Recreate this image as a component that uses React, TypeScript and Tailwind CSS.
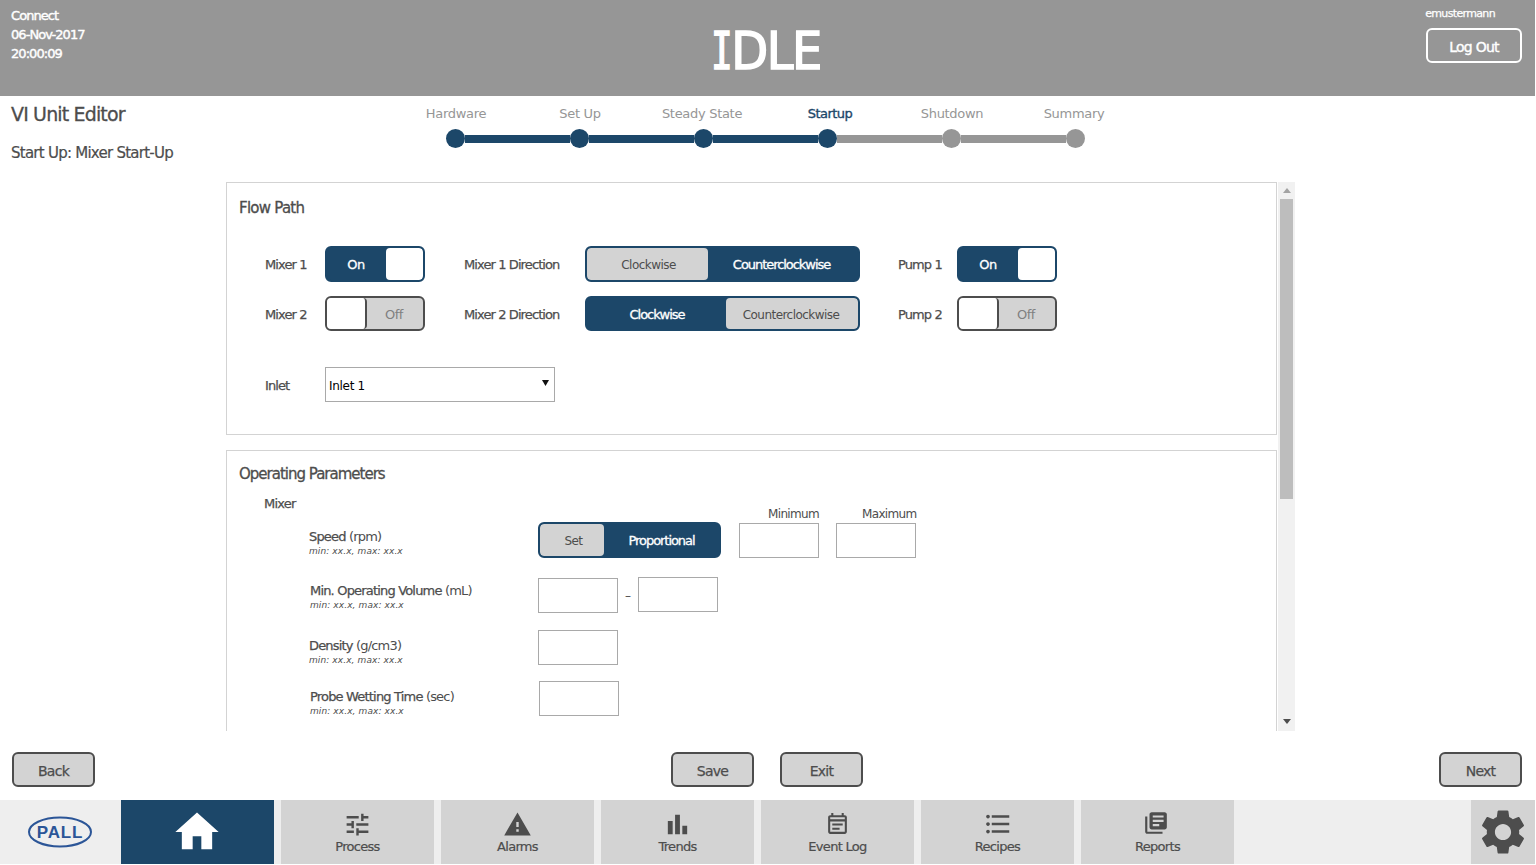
import React from 'react';
import {
  MdBarChart,
  MdFormatListBulleted,
  MdHome,
  MdLibraryBooks,
  MdOutlineEventNote,
  MdSettings,
  MdTune,
  MdWarning,
} from 'react-icons/md';

const steps = [
  { label: 'Hardware', done: true },
  { label: 'Set Up', done: true },
  { label: 'Steady State', done: true, nudge: 'pr-1' },
  { label: 'Startup', done: true, current: true },
  { label: 'Shutdown', done: false },
  { label: 'Summary', done: false, nudge: 'pr-1' },
];

const tabs = [
  { label: 'Process', icon: <MdTune size={29} className="-mb-[2px]" /> },
  { label: 'Alarms', icon: <MdWarning size={29} className="-mb-[2px]" /> },
  { label: 'Trends', icon: <MdBarChart size={29} className="-mb-[2px]" /> },
  { label: 'Event Log', icon: <MdOutlineEventNote size={25} /> },
  { label: 'Recipes', icon: <MdFormatListBulleted size={30} className="-mb-[2px]" /> },
  { label: 'Reports', icon: <MdLibraryBooks size={26} className="mb-[1px] mr-[3px]" /> },
];

const Toggle = ({ on }: { on: boolean }) =>
  on ? (
    <div className="flex h-9 w-[100px] overflow-hidden rounded-md border-2 border-[#1c4769] bg-[#1c4769]">
      <div className="flex w-[59px] items-center justify-center pr-[1px] pt-[2px] text-[13px] tracking-[-0.5px] text-white [-webkit-text-stroke:0.3px_white]">On</div>
      <div className="flex-1 rounded bg-white" />
    </div>
  ) : (
    <div className="flex h-[35px] w-[100px] overflow-hidden rounded-md border-2 border-[#4d4d4d] bg-[#d3d3d3]">
      <div className="w-10 rounded border-r-2 border-[#4d4d4d] bg-white" />
      <div className="flex flex-1 items-center justify-center pr-[2px] pt-[2px] text-[13px] tracking-[-0.5px] text-[#808080]">Off</div>
    </div>
  );

const Segment = ({ items, active, widths, h }: { items: string[]; active: number; widths: string[]; h: string }) => (
  <div className={`flex overflow-hidden rounded-md border-2 border-[#1c4769] bg-[#1c4769] ${h}`}>
    {items.map((t, i) =>
      i === active ? (
        <div key={t} className={`flex items-center justify-center pt-[2px] text-[13px] tracking-[-1.05px] text-white [-webkit-text-stroke:0.3px_white] ${widths[i]}`}>{t}</div>
      ) : (
        <div key={t} className={`flex items-center justify-center rounded bg-[#d3d3d3] pt-[2px] text-[12px] tracking-[-0.55px] text-[#4d4d4d] ${widths[i]}`}>{t}</div>
      )
    )}
  </div>
);

const Field = ({ className = '' }: { className?: string }) => (
  <div className={`h-[35px] w-20 border border-[#a9a9a9] bg-white ${className}`} />
);

const Param = ({ name, unit, className = '' }: { name: string; unit: string; className?: string }) => (
  <div className={`w-[229px] shrink-0 ${className}`}>
    <div className="text-[13px] leading-4 tracking-[-0.82px] text-[#4d4d4d]">
      <span className="[-webkit-text-stroke:0.25px_#4d4d4d]">{name}</span> ({unit})
    </div>
    <div className="text-[9px] italic leading-[12px] tracking-[0.1px] text-[#4d4d4d]">min: xx.x, max: xx.x</div>
  </div>
);

const Label = ({ children }: { children: React.ReactNode }) => (
  <div className="pt-[2px] text-[13px] tracking-[-0.9px] text-[#4d4d4d] [-webkit-text-stroke:0.25px_#4d4d4d]">{children}</div>
);

const ActionButton = ({ children }: { children: React.ReactNode }) => (
  <button className="h-[35px] w-[83px] rounded-md border-2 border-[#4d4d4d] bg-[#d3d3d3] pt-[3px] text-[14px] tracking-[-0.75px] text-[#4d4d4d] [-webkit-text-stroke:0.25px_#4d4d4d]">
    {children}
  </button>
);

export default function App() {
  return (
    <div className="flex h-[864px] w-[1535px] flex-col overflow-hidden bg-white font-['DejaVu_Sans',sans-serif]">
      {/* Header */}
      <header className="flex h-24 shrink-0 justify-between bg-[#969696] text-white">
        <div className="w-[300px] pl-[11px] pt-[6px] text-[13px] leading-[19px] tracking-[-0.95px] [-webkit-text-stroke:0.4px_white]">
          <div>Connect</div>
          <div>06-Nov-2017</div>
          <div>20:00:09</div>
        </div>
        <div className="-ml-[3px] h-fit origin-top scale-y-[1.08] whitespace-nowrap pt-[13px] text-[48px] leading-[68px] tracking-[-1.5px] [-webkit-text-stroke:1.5px_white]">
          <span className="inline-block w-5 origin-left scale-x-[0.75] font-['DejaVu_Sans_Mono',monospace]">I</span>DLE
        </div>
        <div className="flex w-[300px] flex-col items-end pr-[13px] pt-[6px]">
          <div className="mr-[27px] text-[11px] leading-[15px] tracking-[-0.65px] [-webkit-text-stroke:0.25px_white]">emustermann</div>
          <button className="mt-[7px] h-[35px] w-24 rounded-md border-2 border-white pt-[3px] text-[14px] tracking-[-0.75px] [-webkit-text-stroke:0.4px_white]">Log Out</button>
        </div>
      </header>

      {/* Title and stepper */}
      <div className="flex h-[86px] shrink-0">
        <div className="w-[394px] pl-[11px] text-[#4d4d4d]">
          <h1 className="mt-[6px] text-[19px] leading-6 tracking-[-0.85px] [-webkit-text-stroke:0.3px_#4d4d4d]">VI Unit Editor</h1>
          <p className="mt-[17px] text-[15px] leading-5 tracking-[-0.75px] [-webkit-text-stroke:0.2px_#4d4d4d]">Start Up: Mixer Start-Up</p>
        </div>
        <div className="w-[744px]">
          <div className="mt-[9px] grid grid-cols-6 text-center text-[13px] leading-[18px] tracking-[-0.3px] text-[#969696]">
            {steps.map((s) => (
              <div key={s.label} className={s.current ? 'pl-1 tracking-[-0.55px] text-[#1c4769] [-webkit-text-stroke:0.35px_#1c4769]' : s.nudge}>
                {s.label}
              </div>
            ))}
          </div>
          <div className="ml-[52px] mt-[6px] flex items-center">
            {steps.map((s, i) => (
              <React.Fragment key={s.label}>
                <div className={`h-[19px] w-[19px] shrink-0 rounded-full ${s.done ? 'bg-[#1c4769]' : 'bg-[#969696]'}`} />
                {i < steps.length - 1 && (
                  <div className={`h-2 w-[105px] shrink-0 ${steps[i + 1].done ? 'bg-[#1c4769]' : 'bg-[#969696]'}`} />
                )}
              </React.Fragment>
            ))}
          </div>
        </div>
      </div>

      {/* Scrolling editor area */}
      <div className="ml-[226px] flex h-[549px] w-[1069px] shrink-0 overflow-hidden">
        <div className="w-[1051px] shrink-0">
          <section className="h-[253px] border border-[#d3d3d3] pl-3">
            <h2 className="pt-[15px] text-[15px] leading-5 tracking-[-0.75px] text-[#4d4d4d] [-webkit-text-stroke:0.3px_#4d4d4d]">Flow Path</h2>
            <div className="ml-[26px] mt-[28px] grid grid-cols-[60px_139px_121px_313px_59px_100px] items-center gap-y-[14px]">
              <Label>Mixer 1</Label>
              <Toggle on />
              <Label>Mixer 1 Direction</Label>
              <div className="w-[275px]">
                <Segment items={['Clockwise', 'Counterclockwise']} active={1} widths={['w-[121px] pl-[2px]', 'flex-1 pr-[3px]']} h="h-9" />
              </div>
              <Label>Pump 1</Label>
              <Toggle on />
              <Label>Mixer 2</Label>
              <Toggle on={false} />
              <Label>Mixer 2 Direction</Label>
              <div className="w-[275px]">
                <Segment items={['Clockwise', 'Counterclockwise']} active={0} widths={['w-[139px] pl-[1px]', 'flex-1 pr-[2px]']} h="h-[35px]" />
              </div>
              <Label>Pump 2</Label>
              <Toggle on={false} />
            </div>
            <div className="ml-[26px] mt-9 flex items-center">
              <div className="w-[60px] pt-[1px]">
                <Label>Inlet</Label>
              </div>
              <div className="flex h-[35px] w-[230px] items-center justify-between border border-[#a9a9a9] pl-[3px] pr-[5px] pt-[2px] text-[12px] tracking-[-0.3px] text-black">
                <span>Inlet 1</span>
                <svg width="7" height="6" viewBox="0 0 7 6" className="mb-[5px]"><path d="M0 0h7L3.5 6z" fill="#111" /></svg>
              </div>
            </div>
          </section>

          <section className="mt-[15px] h-[320px] border border-[#d3d3d3] pl-3">
            <h2 className="pt-[13px] text-[15px] leading-5 tracking-[-1px] text-[#4d4d4d] [-webkit-text-stroke:0.3px_#4d4d4d]">Operating Parameters</h2>
            <div className="ml-[25px] mt-[11px] text-[13px] leading-[18px] tracking-[-0.8px] text-[#4d4d4d] [-webkit-text-stroke:0.25px_#4d4d4d]">Mixer</div>

            <div className="ml-[70px] -mt-[9px]">
              <div className="flex">
                <Param name="Speed" unit="rpm" className="pt-[25px]" />
                <div className="mt-[18px] w-[183px]">
                  <Segment items={['Set', 'Proportional']} active={1} widths={['w-[64px] pl-[3px]', 'flex-1']} h="h-9" />
                </div>
                <div className="ml-[18px] w-[97px] pt-[2px]">
                  <div className="pl-[29px] text-[12px] leading-4 tracking-[-0.65px] text-[#4d4d4d]">Minimum</div>
                  <Field className="mt-[1px]" />
                </div>
                <div className="w-20 pt-[2px]">
                  <div className="whitespace-nowrap pl-[26px] text-[12px] leading-4 tracking-[-0.65px] text-[#4d4d4d]">Maximum</div>
                  <Field className="mt-[1px]" />
                </div>
              </div>

              <div className="mt-5 flex">
                <Param name="Min. Operating Volume" unit="mL" className="pl-[1px] pt-[5px]" />
                <Field />
                <div className="mt-[9px] w-5 text-center text-[12px] text-[#4d4d4d]">–</div>
                <Field className="-mt-[1px]" />
              </div>

              <div className="mt-[17px] flex">
                <Param name="Density" unit="g/cm3" className="pt-2" />
                <Field />
              </div>

              <div className="mt-[15px] flex">
                <Param name="Probe Wetting Time" unit="sec" className="pl-[1px] pt-2" />
                <Field className="ml-[1px]" />
              </div>
            </div>
          </section>
        </div>

        {/* Scrollbar */}
        <div className="ml-[1px] flex w-[17px] flex-col items-center bg-[#f1f1f1]">
          <svg width="8" height="5" viewBox="0 0 8 5" className="mt-[6px]"><path d="M4 0l4 5H0z" fill="#a3a3a3" /></svg>
          <div className="mt-[6px] h-[300px] w-[13px] bg-[#bdbdbd]" />
          <svg width="8" height="5" viewBox="0 0 8 5" className="mb-[7px] mt-auto"><path d="M0 0h8L4 5z" fill="#4d4d4d" /></svg>
        </div>
      </div>

      {/* Wizard actions */}
      <div className="mt-[21px] flex shrink-0 justify-between pl-3 pr-[13px]">
        <ActionButton>Back</ActionButton>
        <div className="flex gap-[26px]">
          <ActionButton>Save</ActionButton>
          <ActionButton>Exit</ActionButton>
        </div>
        <ActionButton>Next</ActionButton>
      </div>

      {/* Bottom navigation */}
      <nav className="mt-[13px] flex h-[64px] shrink-0 bg-[#eeeeee]">
        <div className="flex w-[121px] items-center justify-center pr-[2px]">
          <svg width="66" height="34" viewBox="0 0 66 34">
            <ellipse cx="33" cy="17" rx="31" ry="14.5" fill="none" stroke="#2b5597" strokeWidth="2" />
            <text x="33" y="23" textAnchor="middle" fontSize="17" fill="#2b5597" fontFamily="'Liberation Sans', sans-serif" fontWeight="700" letterSpacing="0.8">PALL</text>
          </svg>
        </div>
        <div className="flex w-[153px] items-center justify-center bg-[#1c4769] pr-[2px] text-white">
          <MdHome size={52} />
        </div>
        {tabs.map((t) => (
          <div key={t.label} className="ml-[7px] flex w-[153px] flex-col items-center bg-[#d3d3d3] text-[#4d4d4d]">
            <div className="flex h-[37px] items-end">{t.icon}</div>
            <div className="mt-[1px] text-[13px] leading-[17px] tracking-[-0.7px] [-webkit-text-stroke:0.2px_#4d4d4d]">{t.label}</div>
          </div>
        ))}
        <div className="ml-auto flex w-[64px] items-center justify-center bg-[#d3d3d3] text-[#4d4d4d]">
          <MdSettings size={54} />
        </div>
      </nav>
    </div>
  );
}
